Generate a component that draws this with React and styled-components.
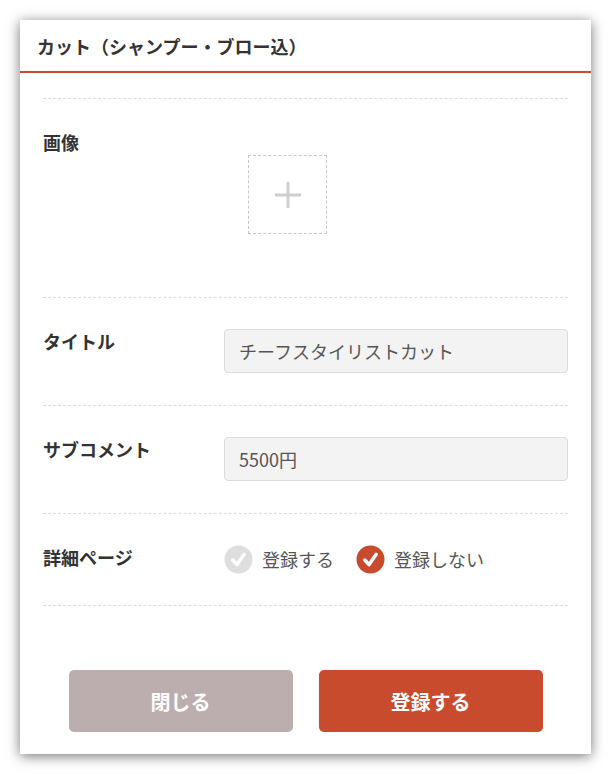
import React, { useState } from "react";
import styled, { createGlobalStyle } from "styled-components";

const GlobalStyle = createGlobalStyle`
  body {
    margin: 0;
    background: #ffffff;
    font-family: "Noto Sans CJK JP", "Noto Sans", sans-serif;
    color: #333;
  }
`;

const Card = styled.div`
  width: 571px;
  margin: 20px;
  background: #fff;
  box-shadow: 0 2px 12px rgba(0, 0, 0, 0.55);
  padding-bottom: 22px;
`;

const Header = styled.div`
  height: 51px;
  display: flex;
  align-items: center;
  padding: 0 17px;
  border-bottom: 2px solid #cc4b2c;
  font-size: 18px;
  font-weight: 700;
  color: #333;
`;

const Body = styled.div`
  padding: 25px 23px 0;
`;

const Row = styled.div`
  display: flex;
  padding: 31px 0 32px;
  border-bottom: 1px dashed #dcdcdc;
  border-top: ${(p) => (p.$first ? "1px dashed #dcdcdc" : "none")};
`;

const Label = styled.div`
  width: 181px;
  flex-shrink: 0;
  font-size: 18px;
  font-weight: 700;
  line-height: 24px;
  color: #333;
`;

const ImageField = styled.div`
  padding: 25px 24px 31px;
`;

const ImageBox = styled.div`
  width: 77px;
  height: 77px;
  border: 1px dashed #c8c8c8;
  display: flex;
  align-items: center;
  justify-content: center;
`;

const Input = styled.div`
  flex: 1;
  height: 42px;
  display: flex;
  align-items: center;
  padding: 0 14px;
  background: #f3f3f3;
  border: 1px solid #dcdcdc;
  border-radius: 4px;
  font-size: 18px;
  color: #555;
`;

const Radios = styled.div`
  display: flex;
  align-items: center;
  gap: 22px;
  height: 28px;
`;

const Radio = styled.label`
  display: flex;
  align-items: center;
  gap: 9px;
  font-size: 18px;
  color: #555;
  cursor: pointer;
`;

const Buttons = styled.div`
  display: flex;
  justify-content: center;
  gap: 26px;
  padding-top: 64px;
`;

const Button = styled.button`
  width: 224px;
  height: 62px;
  border: none;
  border-radius: 5px;
  background: ${(p) => (p.$primary ? "#c84b2e" : "#bcaeae")};
  color: #fff;
  font-family: "Noto Sans CJK JP", "Noto Sans", sans-serif;
  font-size: 20px;
  font-weight: 700;
  cursor: pointer;
`;

function Check({ on }) {
  return (
    <svg width="29" height="29" viewBox="0 0 28 28">
      <circle cx="14" cy="14" r="13.5" fill={on ? "#c84b2e" : "#dedede"} />
      <path
        d="M8.5 14.5 L12.5 19 L19.5 9"
        fill="none"
        stroke="#fff"
        strokeWidth="3.4"
        strokeLinecap="round"
        strokeLinejoin="round"
      />
    </svg>
  );
}

export default function App() {
  const [detail, setDetail] = useState("no");

  return (
    <>
      <GlobalStyle />
      <Card>
        <Header>カット（シャンプー・ブロー込）</Header>
        <Body>
          <Row $first>
            <Label>画像</Label>
            <ImageField>
              <ImageBox>
                <svg width="28" height="28" viewBox="0 0 28 28">
                  <path d="M14 1 V27 M1 14 H27" stroke="#cfcfcf" strokeWidth="3" />
                </svg>
              </ImageBox>
            </ImageField>
          </Row>
          <Row>
            <Label>タイトル</Label>
            <Input>チーフスタイリストカット</Input>
          </Row>
          <Row>
            <Label>サブコメント</Label>
            <Input>5500円</Input>
          </Row>
          <Row>
            <Label>詳細ページ</Label>
            <Radios>
              <Radio onClick={() => setDetail("yes")}>
                <Check on={detail === "yes"} />
                登録する
              </Radio>
              <Radio onClick={() => setDetail("no")}>
                <Check on={detail === "no"} />
                登録しない
              </Radio>
            </Radios>
          </Row>
          <Buttons>
            <Button>閉じる</Button>
            <Button $primary>登録する</Button>
          </Buttons>
        </Body>
      </Card>
    </>
  );
}
